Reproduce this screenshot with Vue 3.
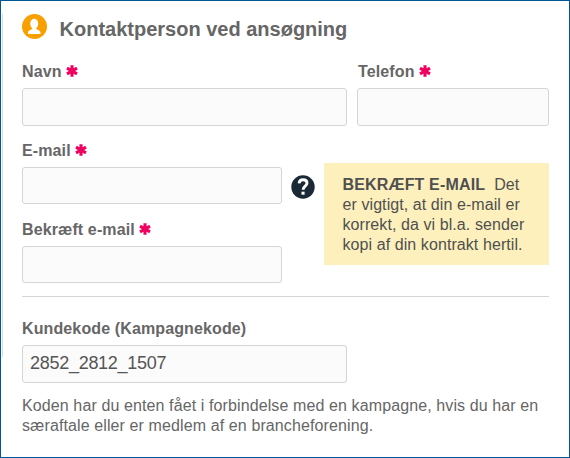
<script setup>
import { ref } from 'vue'

const name = ref('')
const phone = ref('')
const email = ref('')
const confirmEmail = ref('')
const code = ref('2852_2812_1507')
</script>

<template>
  <main class="frame">
    <form class="panel">
      <header class="heading">
        <svg class="person" viewBox="0 0 25 25">
          <circle cx="12.5" cy="12.5" r="12.5" fill="#f9a000" />
          <ellipse cx="12.200" cy="9.700" rx="4" ry="4.900" fill="#fff" />
          <path fill="#fff" d="M10.300 12.500h3.800v2.300c.7 1 4.500 1.300 4.500 4.200 0 .6-.3.9-.9.9H6.800c-.6 0-.9-.3-.9-.9 0-2.900 3.700-3.200 4.400-4.200z" />
        </svg>
        <h1>Kontaktperson ved ansøgning</h1>
      </header>

      <div class="row">
        <label class="field wide">
          <span class="label">Navn
            <svg class="star" viewBox="0 0 12 12"><path d="M6 .3v11.400M1 3.100l10 5.800M1 8.900l10-5.800" /></svg>
          </span>
          <input v-model="name" class="tall" type="text" />
        </label>
        <label class="field phone">
          <span class="label">Telefon
            <svg class="star" viewBox="0 0 12 12"><path d="M6 .3v11.400M1 3.100l10 5.800M1 8.900l10-5.800" /></svg>
          </span>
          <input v-model="phone" class="tall" type="text" />
        </label>
      </div>

      <div class="row mail-row">
        <div class="mails">
          <label class="field">
            <span class="label">E-mail
              <svg class="star" viewBox="0 0 12 12"><path d="M6 .3v11.400M1 3.100l10 5.800M1 8.900l10-5.800" /></svg>
            </span>
            <input v-model="email" type="text" />
          </label>
          <label class="field">
            <span class="label">Bekræft e-mail
              <svg class="star" viewBox="0 0 12 12"><path d="M6 .3v11.400M1 3.100l10 5.800M1 8.900l10-5.800" /></svg>
            </span>
            <input v-model="confirmEmail" type="text" />
          </label>
        </div>
        <svg class="question" viewBox="0 0 24 24">
          <circle cx="12" cy="12" r="11.700" fill="#1b2936" />
          <path d="M8.100 8.400C8.300 5.900 9.800 4.800 12 4.800c2.400 0 4 1.200 4 3.200 0 3-3.900 3.200-3.900 6.700" fill="none" stroke="#fff" stroke-width="2.900" />
          <rect x="10.500" y="16.700" width="3.100" height="3" fill="#fff" />
        </svg>
        <aside class="tip">
          <strong>BEKRÆFT E-MAIL</strong>&nbsp; Det<br />er vigtigt, at din e-mail er<br />korrekt, da vi bl.a. sender<br />kopi af din kontrakt hertil.
        </aside>
      </div>

      <section class="code">
        <label class="field wide">
          <span class="label">Kundekode (Kampagnekode)</span>
          <input v-model="code" class="tall" type="text" />
        </label>
        <p class="help">Koden har du enten fået i forbindelse med en kampagne, hvis du har en<br />særaftale eller er medlem af en brancheforening.</p>
      </section>
    </form>
  </main>
</template>

<style>
body {
  margin: 0;
  background: #fff;
}
</style>

<style scoped>
.frame {
  box-sizing: border-box;
  width: 570px;
  height: 458px;
  padding: 13px 0 0 1px;
  border: 1px solid #005796;
  background: #fff;
  color: #666;
  font: 16px/20px "Liberation Sans", Arial, sans-serif;
  overflow: hidden;
}
.panel {
  box-sizing: border-box;
  width: 547px;
  height: 343px;
  padding-left: 19px;
  border-left: 1px solid #dcdce0;
}
.heading {
  display: flex;
  gap: 12.500px;
  height: 48px;
}
.person {
  width: 25px;
  height: 25px;
  flex: none;
}
h1 {
  margin: 3px 0 0;
  font-size: 20px;
  line-height: 24px;
  white-space: nowrap;
}
.row {
  display: flex;
}
.field {
  display: flex;
  flex-direction: column;
}
.wide {
  width: 325px;
}
.phone {
  width: 192px;
  margin-left: 10px;
}
.phone .label {
  padding-left: 1px;
}
.label {
  height: 26px;
  font-weight: bold;
  letter-spacing: 0.120px;
  white-space: nowrap;
}
.star {
  width: 12px;
  height: 12px;
  stroke: #f0005f;
  stroke-width: 3.100;
}
input {
  box-sizing: border-box;
  width: 100%;
  height: 37px;
  margin: 0;
  padding: 0 7px 2px;
  border: 1px solid #d5d5d5;
  border-radius: 3px;
  background: #fbfbfb;
  color: #555;
  font: 18px "Liberation Sans", Arial, sans-serif;
  letter-spacing: -0.280px;
  outline: none;
}
input.tall {
  height: 38px;
}
.mail-row {
  height: 155px;
  margin-top: 15px;
  border-bottom: 1px solid #d5d5d5;
}
.mails {
  display: flex;
  flex-direction: column;
  gap: 16px;
  width: 260px;
}
.question {
  width: 24px;
  height: 24px;
  margin: 33.500px 0 0 9px;
}
.tip {
  box-sizing: border-box;
  width: 225px;
  height: 102px;
  margin: 22px 0 0 9px;
  padding: 12px 0 0 18.500px;
  background: #fdf0bd;
  color: #505050;
  letter-spacing: 0.080px;
  white-space: nowrap;
}
.tip strong {
  letter-spacing: 0.160px;
}
.code {
  margin-top: 22px;
}
.help {
  margin: 13px 0 0;
  letter-spacing: 0.110px;
  white-space: nowrap;
}
</style>
